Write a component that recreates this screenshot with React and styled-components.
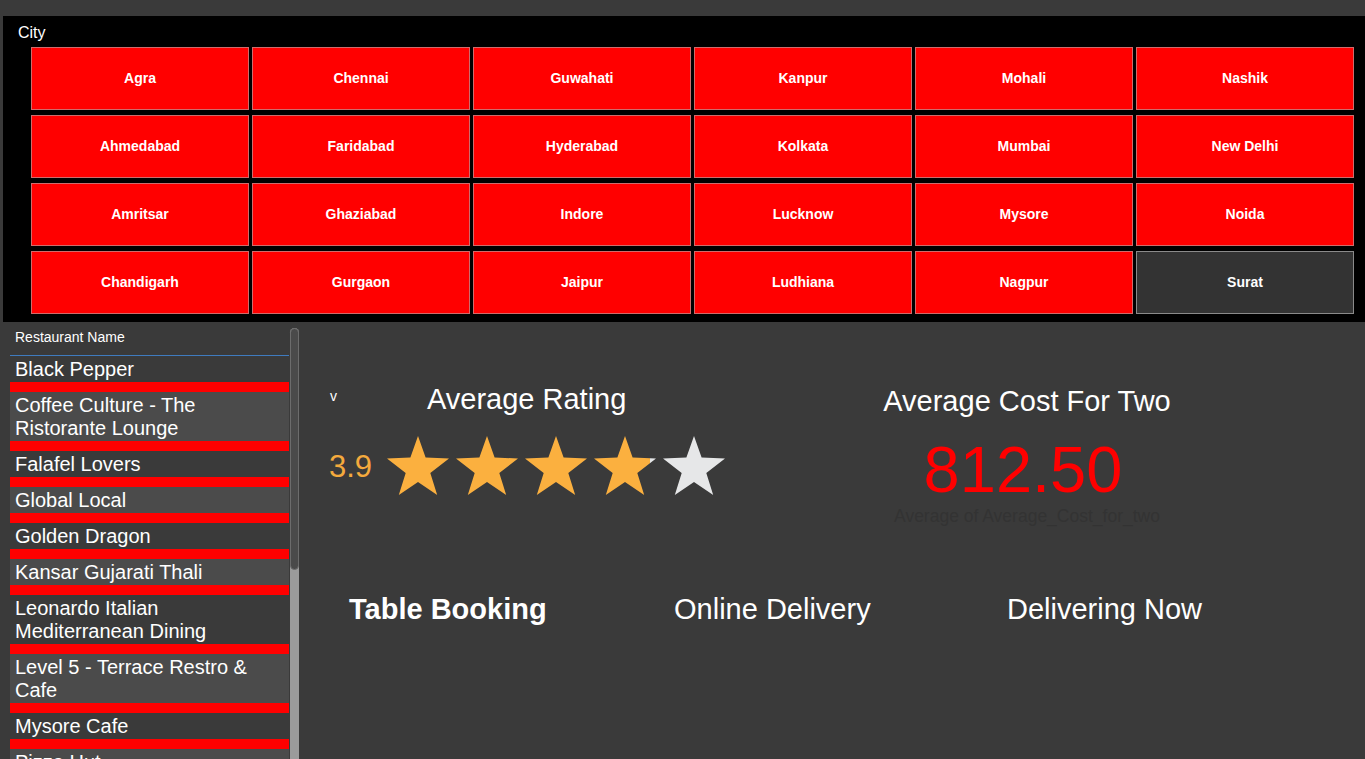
import React from 'react'
import styled, { createGlobalStyle } from 'styled-components'

const GlobalStyle = createGlobalStyle`
  html, body {
    margin: 0;
    padding: 0;
    background: #3a3a3a;
    overflow: hidden;
  }
  * {
    box-sizing: border-box;
  }
`

const Page = styled.div`
  width: 1365px;
  height: 759px;
  overflow: hidden;
  background: #3a3a3a;
  padding-top: 16px;
  font-family: 'Liberation Sans', Arial, sans-serif;
  color: #fff;
`

const CityPanel = styled.div`
  margin-left: 3px;
  height: 306px;
  background: #000;
  padding: 8px 11px 8px 15px;
`
const PanelLabel = styled.div`
  font-size: 16px;
  line-height: 18px;
`
const CityGrid = styled.div`
  display: grid;
  grid-template-columns: repeat(6, 218px);
  grid-auto-rows: 63px;
  column-gap: 3px;
  row-gap: 5px;
  margin-top: 5px;
  padding-left: 13px;
`
const CityButton = styled.div`
  display: flex;
  align-items: center;
  justify-content: center;
  padding-bottom: 1px;
  font-size: 14px;
  font-weight: bold;
  color: #fff;
  background: ${(p) => (p.$selected ? '#333333' : '#ff0000')};
  border: 1px solid ${(p) => (p.$selected ? '#8a8a8a' : '#cf6b6b')};
`

const Lower = styled.div`
  display: flex;
  height: 437px;
`

const ListColumn = styled.div`
  display: flex;
  margin: 6px 0 0 10px;
  width: 289px;
`
const ListBody = styled.div`
  width: 279px;
`
const ListHeader = styled.div`
  height: 28px;
  font-size: 14px;
  line-height: 18px;
  padding: 0 5px;
  border-bottom: 1px solid #3f7bbf;
`
const ListItem = styled.div`
  font-size: 20px;
  line-height: 23px;
  padding: 2px 5px 1px;
  background: ${(p) => (p.$alt ? '#4b4b4b' : '#3a3a3a')};
  border-bottom: 10px solid #ff0000;
`
const ScrollTrack = styled.div`
  width: 9px;
  margin-left: 1px;
  height: 100%;
  background: #9b9b9b;
  border-radius: 5px 5px 0 0;
`
const ScrollThumb = styled.div`
  height: 242px;
  background: #4a4a4a;
  border: 1px solid #6c6c6c;
  border-radius: 5px;
`

const Main = styled.div`
  flex: 1;
  display: flex;
  flex-direction: column;
  padding: 61px 0 0 30px;
`
const TopRow = styled.div`
  display: flex;
`
const RatingCard = styled.div`
  width: 400px;
`
const CardHead = styled.div`
  display: flex;
  align-items: center;
`
const Caret = styled.span`
  width: 98px;
  padding-left: 1px;
  font-size: 14px;
  margin-top: -6px;
`
const Title = styled.div`
  font-size: 29px;
  line-height: 32px;
  white-space: nowrap;
  font-weight: ${(p) => (p.$bold ? 'bold' : 'normal')};
`
const StarsRow = styled.div`
  display: flex;
  align-items: center;
  margin-top: 21px;
  height: 60px;
`
const RatingValue = styled.span`
  font-size: 31px;
  color: #f4aa3d;
  margin-right: 15px;
  margin-top: 2px;
`
const Stars = styled.div`
  display: flex;
  gap: 7px;
`

const CostCard = styled.div`
  width: 320px;
  margin-left: 138px;
  padding-top: 2px;
  display: flex;
  flex-direction: column;
  align-items: center;
`
const BigValue = styled.div`
  margin-top: 21px;
  font-size: 65px;
  line-height: 64px;
  color: #ff0000;
  margin-right: 8px;
`
const SubLabel = styled.div`
  margin-top: 5px;
  font-size: 17.5px;
  line-height: 18px;
  color: #333333;
  white-space: nowrap;
`

const FlagsRow = styled.div`
  display: grid;
  grid-template-columns: 325px 333px auto;
  margin-top: 68px;
  padding-left: 20px;
`

const STAR = '31,0 38.6,21.6 62,22.5 43.3,37 50.2,59 31,46 11.8,59 18.7,37 0,22.5 23.4,21.6'

const Star = ({ fill, id }) => (
  <svg width="62" height="60" viewBox="0 0 62 60">
    <defs>
      <linearGradient id={id} x1="0" x2="1" y1="0" y2="0">
        <stop offset={fill} stopColor="#fbb03f" />
        <stop offset={fill} stopColor="#e6e7e8" />
      </linearGradient>
    </defs>
    <polygon points={STAR} fill={`url(#${id})`} />
  </svg>
)

const cities = [
  'Agra', 'Chennai', 'Guwahati', 'Kanpur', 'Mohali', 'Nashik',
  'Ahmedabad', 'Faridabad', 'Hyderabad', 'Kolkata', 'Mumbai', 'New Delhi',
  'Amritsar', 'Ghaziabad', 'Indore', 'Lucknow', 'Mysore', 'Noida',
  'Chandigarh', 'Gurgaon', 'Jaipur', 'Ludhiana', 'Nagpur', 'Surat',
]

const restaurants = [
  'Black Pepper',
  'Coffee Culture - The Ristorante Lounge',
  'Falafel Lovers',
  'Global Local',
  'Golden Dragon',
  'Kansar Gujarati Thali',
  'Leonardo Italian Mediterranean Dining',
  'Level 5 - Terrace Restro & Cafe',
  'Mysore Cafe',
  'Pizza Hut',
  'Sankalp',
]

const rating = 3.9

const App = () => (
  <Page>
    <GlobalStyle />
    <CityPanel>
      <PanelLabel>City</PanelLabel>
      <CityGrid>
        {cities.map((c) => (
          <CityButton key={c} $selected={c === 'Surat'}>
            {c}
          </CityButton>
        ))}
      </CityGrid>
    </CityPanel>
    <Lower>
      <ListColumn>
        <ListBody>
          <ListHeader>Restaurant Name</ListHeader>
          {restaurants.map((r, i) => (
            <ListItem key={r} $alt={i % 2 === 1}>
              {r}
            </ListItem>
          ))}
        </ListBody>
        <ScrollTrack>
          <ScrollThumb />
        </ScrollTrack>
      </ListColumn>
      <Main>
        <TopRow>
          <RatingCard>
            <CardHead>
              <Caret>v</Caret>
              <Title>Average Rating</Title>
            </CardHead>
            <StarsRow>
              <RatingValue>{rating}</RatingValue>
              <Stars>
                {[0, 1, 2, 3, 4].map((i) => (
                  <Star
                    key={i}
                    id={`star-${i}`}
                    fill={Math.max(0, Math.min(1, rating - i))}
                  />
                ))}
              </Stars>
            </StarsRow>
          </RatingCard>
          <CostCard>
            <Title>Average Cost For Two</Title>
            <BigValue>812.50</BigValue>
            <SubLabel>Average of Average_Cost_for_two</SubLabel>
          </CostCard>
        </TopRow>
        <FlagsRow>
          <Title $bold>Table Booking</Title>
          <Title>Online Delivery</Title>
          <Title>Delivering Now</Title>
        </FlagsRow>
      </Main>
    </Lower>
  </Page>
)

export default App
